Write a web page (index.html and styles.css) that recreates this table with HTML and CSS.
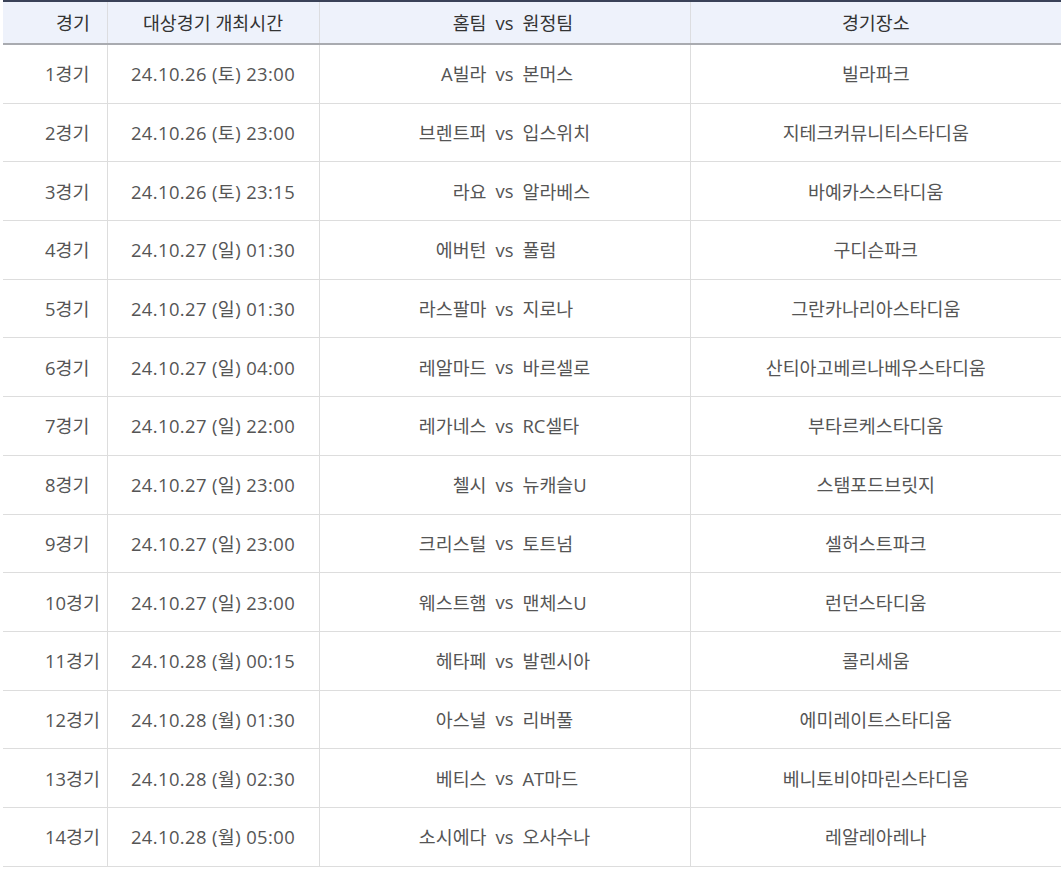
FILE: index.html
```html
<!DOCTYPE html>
<html lang="ko">
<head>
<meta charset="utf-8">
<title>경기 일정</title>
<link rel="stylesheet" href="styles.css">
</head>
<body>
<table class="schedule">
  <colgroup>
    <col class="c-no"><col class="c-time"><col class="c-match"><col class="c-place">
  </colgroup>
  <thead>
    <tr>
      <th class="no">경기</th>
      <th>대상경기 개최시간</th>
      <th><div class="match"><span class="home">홈팀</span><span class="vs">vs</span><span class="away">원정팀</span></div></th>
      <th>경기장소</th>
    </tr>
  </thead>
  <tbody>
    <tr><td class="no">1경기</td><td class="time">24.10.26 (토) 23:00</td><td><div class="match"><span class="home">A빌라</span><span class="vs">vs</span><span class="away">본머스</span></div></td><td>빌라파크</td></tr>
    <tr><td class="no">2경기</td><td class="time">24.10.26 (토) 23:00</td><td><div class="match"><span class="home">브렌트퍼</span><span class="vs">vs</span><span class="away">입스위치</span></div></td><td>지테크커뮤니티스타디움</td></tr>
    <tr><td class="no">3경기</td><td class="time">24.10.26 (토) 23:15</td><td><div class="match"><span class="home">라요</span><span class="vs">vs</span><span class="away">알라베스</span></div></td><td>바예카스스타디움</td></tr>
    <tr><td class="no">4경기</td><td class="time">24.10.27 (일) 01:30</td><td><div class="match"><span class="home">에버턴</span><span class="vs">vs</span><span class="away">풀럼</span></div></td><td>구디슨파크</td></tr>
    <tr><td class="no">5경기</td><td class="time">24.10.27 (일) 01:30</td><td><div class="match"><span class="home">라스팔마</span><span class="vs">vs</span><span class="away">지로나</span></div></td><td>그란카나리아스타디움</td></tr>
    <tr><td class="no">6경기</td><td class="time">24.10.27 (일) 04:00</td><td><div class="match"><span class="home">레알마드</span><span class="vs">vs</span><span class="away">바르셀로</span></div></td><td>산티아고베르나베우스타디움</td></tr>
    <tr><td class="no">7경기</td><td class="time">24.10.27 (일) 22:00</td><td><div class="match"><span class="home">레가네스</span><span class="vs">vs</span><span class="away">RC셀타</span></div></td><td>부타르케스타디움</td></tr>
    <tr><td class="no">8경기</td><td class="time">24.10.27 (일) 23:00</td><td><div class="match"><span class="home">첼시</span><span class="vs">vs</span><span class="away">뉴캐슬U</span></div></td><td>스탬포드브릿지</td></tr>
    <tr><td class="no">9경기</td><td class="time">24.10.27 (일) 23:00</td><td><div class="match"><span class="home">크리스털</span><span class="vs">vs</span><span class="away">토트넘</span></div></td><td>셀허스트파크</td></tr>
    <tr><td class="no">10경기</td><td class="time">24.10.27 (일) 23:00</td><td><div class="match"><span class="home">웨스트햄</span><span class="vs">vs</span><span class="away">맨체스U</span></div></td><td>런던스타디움</td></tr>
    <tr><td class="no">11경기</td><td class="time">24.10.28 (월) 00:15</td><td><div class="match"><span class="home">헤타페</span><span class="vs">vs</span><span class="away">발렌시아</span></div></td><td>콜리세움</td></tr>
    <tr><td class="no">12경기</td><td class="time">24.10.28 (월) 01:30</td><td><div class="match"><span class="home">아스널</span><span class="vs">vs</span><span class="away">리버풀</span></div></td><td>에미레이트스타디움</td></tr>
    <tr><td class="no">13경기</td><td class="time">24.10.28 (월) 02:30</td><td><div class="match"><span class="home">베티스</span><span class="vs">vs</span><span class="away">AT마드</span></div></td><td>베니토비야마린스타디움</td></tr>
    <tr><td class="no">14경기</td><td class="time">24.10.28 (월) 05:00</td><td><div class="match"><span class="home">소시에다</span><span class="vs">vs</span><span class="away">오사수나</span></div></td><td>레알레아레나</td></tr>
  </tbody>
</table>
</body>
</html>
```

FILE: styles.css
```css
html, body {
  margin: 0;
  padding: 0;
  background: #ffffff;
}
body {
  padding-left: 3px;
  font-family: "Open Sans", "Noto Sans CJK KR", sans-serif;
}
.schedule {
  width: 1058px;
  border-collapse: collapse;
  table-layout: fixed;
  border-top: 2px solid #3a4258;
  font-size: 18.4px;
  color: #555555;
}
.c-no { width: 104px; }
.c-time { width: 212px; }
.c-match { width: 371px; }
.c-place { width: 371px; }

.schedule th {
  height: 40px;
  padding: 0 0 1px;
  background: #eef2fb;
  color: #333333;
  font-weight: normal;
  text-align: center;
  border-bottom: 2px solid #a9abb0;
  border-left: 1px solid #dcdde0;
}
.schedule td {
  height: 56.7px;
  padding: 0 0 1px;
  text-align: center;
  border-bottom: 1px solid #dddddd;
  border-left: 1px solid #dddddd;
}
.schedule th:first-child,
.schedule td:first-child {
  border-left: none;
}
.schedule th.no {
  text-align: left;
  padding-left: 53px;
}
.schedule td.no {
  text-align: left;
  padding-left: 42px;
}
.schedule td.time {
  letter-spacing: 0.4px;
}
.match {
  display: grid;
  grid-template-columns: 1fr auto 1fr;
  column-gap: 9px;
  align-items: center;
}
.match .home { text-align: right; }
.match .away { text-align: left; }
```
